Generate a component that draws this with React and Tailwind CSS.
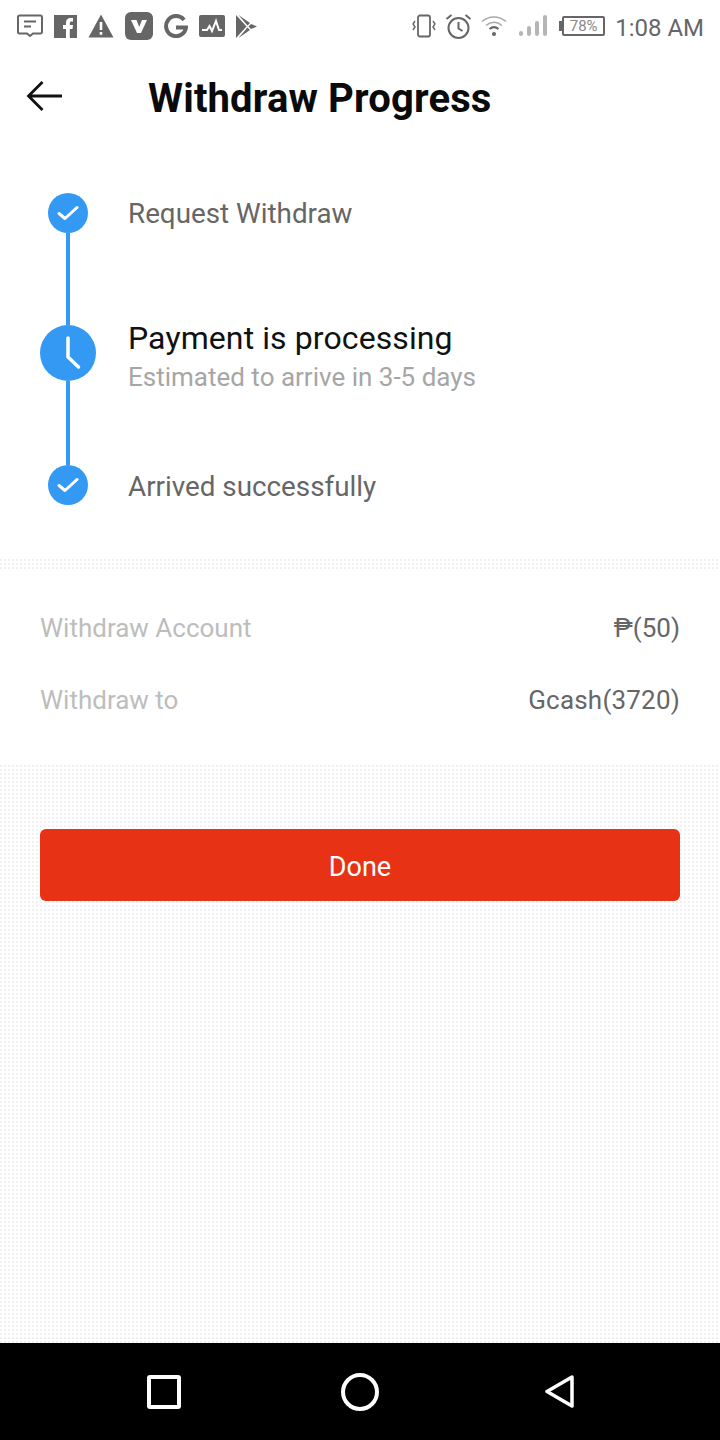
import React from 'react';

const grey = '#666666';

const StatusLeft = () => (
  <div className="flex items-center gap-[11px]">
    {/* message */}
    <svg width="26" height="26" viewBox="0 0 26 26" fill="none" stroke={grey} strokeWidth="2">
      <path d="M2.500 2.500h21a1.500 1.500 0 0 1 1.500 1.500v15a1.500 1.500 0 0 1-1.500 1.500h-7.500l-3 2.500-3-2.500h-7.500a1.500 1.500 0 0 1-1.500-1.500v-15a1.500 1.500 0 0 1 1.500-1.500z" />
      <path d="M7 8.500h12M7 13.500h7" />
    </svg>
    {/* facebook */}
    <svg width="23" height="23" viewBox="0 0 23 23">
      <rect width="23" height="23" fill={grey} />
      <path d="M12 23v-9h-3v-4h3V7.500c0-3 1.700-4.500 4.500-4.500H19v3.500h-1.500c-1.300 0-1.700.6-1.700 1.700V10h3.200l-.5 4h-2.700v9z" fill="#fff" />
    </svg>
    {/* warning */}
    <svg width="26" height="24" viewBox="0 0 26 24">
      <path d="M13 0.500 25.500 23.500H0.500z" fill={grey} />
      <rect x="11.700" y="8" width="2.600" height="8" fill="#fff" />
      <rect x="11.700" y="18" width="2.600" height="2.800" fill="#fff" />
    </svg>
    {/* v app */}
    <svg width="28" height="28" viewBox="0 0 28 28">
      <rect width="28" height="28" rx="6" fill={grey} />
      <path d="M6 8h5.500l2.700 7L17 8h5l-6 13h-4z" fill="#fff" />
    </svg>
    {/* google */}
    <svg width="24" height="24" viewBox="0 0 24 24" fill="none" stroke={grey} strokeWidth="4">
      <path d="M20 6a10 10 0 1 0 2 7.500H12" />
    </svg>
    {/* pulse */}
    <svg width="26" height="22" viewBox="0 0 26 22">
      <rect width="26" height="22" rx="2" fill={grey} />
      <path d="M3 15h5l2.500-4 2.500 5 4-10 3 9h3" fill="none" stroke="#fff" strokeWidth="2" />
    </svg>
    {/* play */}
    <svg width="21" height="23" viewBox="0 0 21 23">
      <path d="M0 0 10.500 11.500 0 23z" fill={grey} />
      <path d="M2.500 0 14 8l-2.500 2.500zM2.500 23 14 15l-2.500-2.500zM15 9l6 2.500-6 2.500-2.500-2.500z" fill={grey} />
    </svg>
  </div>
);

const StatusRight = () => (
  <div className="flex items-center">
    <svg width="24" height="24" viewBox="0 0 24 24" fill="none" stroke={grey} strokeWidth="1.800" className="mr-[9px]">
      <rect x="6" y="1.500" width="12" height="21" rx="2" />
      <path d="M3 7 1 10l2 3-2 3M21 7l2 3-2 3 2 3" strokeWidth="1.400" />
    </svg>
    <svg width="27" height="27" viewBox="0 0 27 27" fill="none" stroke={grey} strokeWidth="2" className="mr-[9px]">
      <circle cx="13.500" cy="15" r="10" />
      <path d="M13.500 9v6.500l4 2.500M1.500 6l5-4M25.500 6l-5-4" />
    </svg>
    <svg width="26" height="22" viewBox="0 0 26 22" fill="none" stroke="#a8a8a8" strokeWidth="1.500" className="mr-[12px]">
      <path d="M1 6.500c7-6 17-6 24 0M5 10.500c5-4 11-4 16 0" />
      <path d="M8.500 14c3-2.500 6-2.500 9 0" strokeWidth="2" stroke={grey} />
      <circle cx="13" cy="19" r="2" fill={grey} stroke="none" />
    </svg>
    <svg width="29" height="22" viewBox="0 0 29 22" fill="#b5b5b5" className="mr-[11px]">
      <rect x="0" y="16" width="4" height="5" rx="2" />
      <rect x="8" y="11" width="4" height="10" rx="2" />
      <rect x="16" y="6" width="4" height="15" rx="2" />
      <rect x="24" y="0" width="4" height="21" rx="2" />
    </svg>
    <span className="w-[3px] h-[10px] bg-[#666666]" />
    <div className="w-[43px] h-[20px] border-2 border-[#666666] rounded-[2px] flex items-center justify-center text-[15px] leading-none text-[#888888] mr-[10px]">
      78%
    </div>
    <span className="mt-[3px] text-[24px] leading-none text-[#666666] whitespace-nowrap">1:08 AM</span>
  </div>
);

const Check = () => (
  <div className="w-[40px] h-[40px] rounded-full bg-[#3399f3] flex items-center justify-center shrink-0">
    <svg width="22" height="16" viewBox="0 0 22 16" fill="none" stroke="#fff" strokeWidth="3" strokeLinecap="round" strokeLinejoin="round">
      <path d="M2 8.500 8 13.500 20 2.500" />
    </svg>
  </div>
);

const Clock = () => (
  <div className="w-[56px] h-[56px] rounded-full bg-[#3399f3] flex items-center justify-center shrink-0">
    <svg width="56" height="56" viewBox="0 0 56 56" fill="none" stroke="#fff" strokeWidth="3.500" strokeLinecap="round" strokeLinejoin="round">
      <path d="M28 13v19l10.500 10" />
    </svg>
  </div>
);

export default function App() {
  return (
    <div className="w-[720px] h-[1440px] flex flex-col bg-white overflow-hidden font-['Roboto',sans-serif]">
      <div className="h-[52px] pl-[17px] pr-[16px] flex items-center justify-between shrink-0">
        <StatusLeft />
        <StatusRight />
      </div>

      <div className="h-[92px] flex items-center pl-[26px] shrink-0">
        <svg width="36" height="32" viewBox="0 0 36 32" fill="none" stroke="#111111" strokeWidth="2.800" className="mt-[-4px]">
          <path d="M16.500 2 2.500 16l14 14M2.500 16H36" />
        </svg>
        <h1 className="ml-[86px] mt-[2px] text-[40px] tracking-[0.15px] leading-none font-bold text-[#0a0a0a] whitespace-nowrap">Withdraw Progress</h1>
      </div>

      {/* steps */}
      <div className="flex pt-[49px] pl-[40px] h-[415px] shrink-0">
        <div className="w-[56px] flex flex-col items-center">
          <Check />
          <div className="w-[4px] h-[92px] bg-[#3399f3]" />
          <Clock />
          <div className="w-[4px] h-[84px] bg-[#3399f3]" />
          <Check />
        </div>
        <div className="ml-[32px] flex flex-col">
          <div className="h-[40px] pt-[2px] flex items-center text-[27.8px] text-[#666666] whitespace-nowrap">Request Withdraw</div>
          <div className="mt-[86px] text-[32px] tracking-[0.1px] leading-[38px] text-[#111111] whitespace-nowrap">Payment is processing</div>
          <div className="mt-[3px] text-[26px] leading-[34px] text-[#a6a6a6] whitespace-nowrap">Estimated to arrive in 3-5 days</div>
          <div className="mt-[73px] h-[40px] flex items-center text-[27.8px] text-[#666666] whitespace-nowrap">Arrived successfully</div>
        </div>
      </div>

      <div className="h-[11px] bg-[radial-gradient(circle_at_1px_1px,#f0f0f0_0.7px,transparent_0.9px)] bg-[size:4px_4px] shrink-0" />

      <div className="h-[195px] px-[40px] pt-[22px] flex flex-col shrink-0">
        <div className="h-[72px] flex items-center justify-between text-[26px]">
          <span className="text-[#bdbdbd]">Withdraw Account</span>
          <span className="text-[#666666]">₱(50)</span>
        </div>
        <div className="h-[72px] flex items-center justify-between text-[26px]">
          <span className="text-[#bdbdbd]">Withdraw to</span>
          <span className="text-[#666666] tracking-[0.2px]">Gcash(3720)</span>
        </div>
      </div>

      <div className="flex-1 bg-[radial-gradient(circle_at_1px_1px,#f0f0f0_0.7px,transparent_0.9px)] bg-[size:4px_4px] px-[40px] pt-[64px]">
        <button className="w-full h-[72px] pt-[4px] rounded-[6px] bg-[#e73216] text-white text-[27px] flex items-center justify-center">Done</button>
      </div>

      <div className="h-[97px] bg-black flex items-center pl-[147px] shrink-0">
        <svg width="34" height="34" viewBox="0 0 34 34" fill="none" stroke="#fff" strokeWidth="4" strokeLinejoin="round"><rect x="2" y="2" width="30" height="30" rx="1" /></svg>
        <svg width="38" height="38" viewBox="0 0 38 38" fill="none" stroke="#fff" strokeWidth="4" className="ml-[160px]"><circle cx="19" cy="19" r="17" /></svg>
        <svg width="29" height="33" viewBox="0 0 29 33" fill="none" stroke="#fff" strokeWidth="3.500" strokeLinejoin="round" className="ml-[166px]"><path d="M27 2 2 16.500 27 31z" /></svg>
      </div>
    </div>
  );
}
